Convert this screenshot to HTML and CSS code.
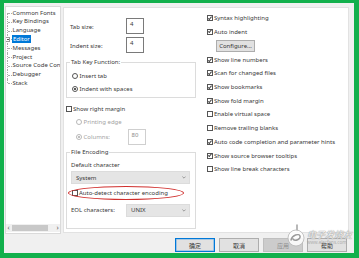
FILE: index.html
```html
<!DOCTYPE html>
<html lang="en">
<head>
  <meta charset="UTF-8">
  <meta name="viewport" content="width=device-width, initial-scale=1.0">
  <title>Editor Options</title>
  <link rel="stylesheet" href="styles.css">
</head>
<body>
  <div class="dialog">
    <div class="dialog-body">
      <!-- Category tree -->
      <div class="tree">
        <ul class="tree-list">
          <li>Common Fonts</li>
          <li>Key Bindings</li>
          <li>Language</li>
          <li class="has-children"><span class="expander"></span><span class="selected">Editor</span></li>
          <li>Messages</li>
          <li>Project</li>
          <li>Source Code Con</li>
          <li>Debugger</li>
          <li>Stack</li>
        </ul>
        <div class="hscroll">
          <span class="scroll-arrow">&lsaquo;</span>
          <div class="scroll-track"><div class="scroll-thumb"></div></div>
          <span class="scroll-arrow">&rsaquo;</span>
        </div>
      </div>

      <!-- Editor page -->
      <div class="panel">
        <div class="col-left">
          <div class="field-row">
            <span class="field-label">Tab size:</span>
            <span class="textbox">4</span>
          </div>
          <div class="field-row">
            <span class="field-label">Indent size:</span>
            <span class="textbox">4</span>
          </div>

          <fieldset class="group group-tabkey">
            <legend>Tab Key Function:</legend>
            <div class="opt"><span class="radio"></span>Insert tab</div>
            <div class="opt"><span class="radio on"></span>Indent with spaces</div>
          </fieldset>

          <div class="opt margin-toggle"><span class="check"></span>Show right margin</div>
          <div class="opt sub disabled printing-row"><span class="radio"></span>Printing edge</div>
          <div class="opt sub disabled columns-row">
            <span class="radio on"></span><span class="columns-label">Columns:</span>
            <span class="textbox">80</span>
          </div>

          <fieldset class="group group-encoding">
            <legend>File Encoding</legend>
            <div class="enc-label">Default character</div>
            <div class="combo combo-wide">System
              <svg class="chev" viewBox="0 0 6 4"><path d="M0.6 0.6 L3 3 L5.4 0.6" /></svg>
            </div>
            <div class="opt detect-row">
              <span class="check"></span>Auto-detect character encoding
              <span class="annotation"></span>
            </div>
            <div class="eol-row">
              <span class="eol-label">EOL characters:</span>
              <div class="combo combo-eol">UNIX
                <svg class="chev" viewBox="0 0 6 4"><path d="M0.6 0.6 L3 3 L5.4 0.6" /></svg>
              </div>
            </div>
          </fieldset>
        </div>

        <div class="col-right">
          <div class="opt"><span class="check on"></span>Syntax highlighting</div>
          <div class="opt"><span class="check on"></span>Auto indent</div>
          <div class="btn-row"><button class="btn-configure">Configure...</button></div>
          <div class="opt"><span class="check on"></span>Show line numbers</div>
          <div class="opt"><span class="check on"></span>Scan for changed files</div>
          <div class="opt"><span class="check on"></span>Show bookmarks</div>
          <div class="opt"><span class="check on"></span>Show fold margin</div>
          <div class="opt"><span class="check"></span>Enable virtual space</div>
          <div class="opt"><span class="check"></span>Remove trailing blanks</div>
          <div class="opt"><span class="check on"></span>Auto code completion and parameter hints</div>
          <div class="opt"><span class="check on"></span>Show source browser tooltips</div>
          <div class="opt"><span class="check"></span>Show line break characters</div>
        </div>
      </div>
    </div>

    <!-- Dialog buttons -->
    <div class="buttons">
      <button class="btn btn-default">确定</button>
      <button class="btn">取消</button>
      <button class="btn" disabled>应用</button>
      <button class="btn">帮助</button>
    </div>

    <!-- Site watermark -->
    <div class="watermark">
      <svg class="wm-logo" viewBox="0 0 20 24">
        <line x1="11" y1="1" x2="11" y2="7" />
        <circle cx="10" cy="14" r="8" />
        <path d="M5 16 C6 11 13 9 14 12 C15 15 9 18 7 15" />
      </svg>
      <div class="wm-text">
        <span class="wm-name">电子发烧友</span>
        <span class="wm-url">www.elecfans.com</span>
      </div>
    </div>
  </div>
</body>
</html>
```

FILE: styles.css
```css
html, body {
  margin: 0;
  padding: 0;
  background-color: #12b04c;
}

body {
  width: 359px;
  height: 258px;
  padding: 3px 5px 5px 4px;
  box-sizing: border-box;
  font-family: 'Noto Sans', 'Noto Sans CJK SC', sans-serif;
  font-size: 6px;
  color: #383838;
}

/* Dialog frame */
.dialog {
  position: relative;
  height: 250px;
  background-color: #f0f0f0;
  padding: 3px 5px 1px 1px;
  box-sizing: border-box;
  display: flex;
  flex-direction: column;
}

.dialog-body {
  display: flex;
  height: 228px;
}

/* Category tree */
.tree {
  width: 56px;
  height: 228px;
  box-sizing: border-box;
  background-color: #fff;
  border: 1px solid #dadada;
  display: flex;
  flex-direction: column;
}

.tree-list {
  list-style: none;
  margin: 0;
  padding: 1.6px 0 0 0;
  flex: 1;
}

.tree-list li {
  position: relative;
  height: 8.8px;
  line-height: 8.8px;
  padding-left: 6.5px;
  white-space: nowrap;
  overflow: hidden;
}

.tree-list li::before {
  content: '';
  position: absolute;
  left: 1px;
  top: 0;
  bottom: 0;
  border-left: 1px dotted #ababab;
}

.tree-list li:first-child::before {
  top: 50%;
}

.tree-list li:last-child::before {
  bottom: 50%;
}

.tree-list li::after {
  content: '';
  position: absolute;
  left: 2px;
  top: 4.4px;
  width: 4px;
  border-top: 1px dotted #ababab;
}

.expander {
  position: absolute;
  left: -1px;
  top: 2px;
  width: 5px;
  height: 5px;
  box-sizing: border-box;
  border: 1px solid #9a9a9a;
  background-color: #fff;
  z-index: 1;
}

.expander::after {
  content: '';
  position: absolute;
  left: 0.5px;
  top: 1px;
  width: 2px;
  height: 1px;
  background-color: #555;
}

.selected {
  background-color: #0078d7;
  color: #fff;
  padding: 0.5px 1px;
  margin-left: -0.5px;
}

.hscroll {
  height: 8px;
  display: flex;
  align-items: center;
  background-color: #f0f0f0;
  margin-bottom: 1px;
  color: #606060;
  font-size: 7px;
}

.scroll-arrow {
  width: 5px;
  text-align: center;
  line-height: 8px;
}

.scroll-track {
  flex: 1;
  height: 8px;
  display: flex;
  align-items: center;
  padding-left: 0.5px;
}

.scroll-thumb {
  width: 36px;
  height: 6px;
  background-color: #c8c8c8;
}

/* Editor page */
.panel {
  width: 286px;
  height: 226px;
  margin: 1px 0 0 2px;
  box-sizing: border-box;
  background-color: #fff;
  border: 1px solid #e2e2e2;
  display: flex;
}

.col-left {
  width: 130px;
  padding: 10px 0 0 2px;
}

.col-right {
  margin-left: 11px;
  padding-top: 3px;
}

.field-row {
  display: flex;
  align-items: center;
  height: 16px;
  padding-left: 4px;
}

.field-row + .field-row {
  margin-top: 3px;
}

.field-label {
  width: 56px;
  padding-top: 1px;
}

.textbox {
  width: 18px;
  height: 16px;
  box-sizing: border-box;
  border: 1px solid #7a7a7a;
  background-color: #fff;
  padding: 1px 0 0 3px;
  line-height: 8px;
}

.opt {
  display: flex;
  align-items: center;
  height: 13px;
  white-space: nowrap;
}

.col-right .opt {
  height: 13.7px;
}

.check {
  position: relative;
  width: 6px;
  height: 6px;
  box-sizing: border-box;
  border: 1px solid #555;
  margin-right: 1px;
  flex-shrink: 0;
}

.check.on::after {
  content: '';
  position: absolute;
  left: 1.3px;
  top: -0.2px;
  width: 1.3px;
  height: 2.6px;
  border-right: 0.8px solid #444;
  border-bottom: 0.8px solid #444;
  transform: rotate(40deg);
}

.radio {
  position: relative;
  width: 6px;
  height: 6px;
  box-sizing: border-box;
  border: 1px solid #555;
  border-radius: 50%;
  margin-right: 1.5px;
  flex-shrink: 0;
}

.radio.on::after {
  content: '';
  position: absolute;
  left: 1px;
  top: 1px;
  width: 2px;
  height: 2px;
  border-radius: 50%;
  background-color: #222;
}

/* Group boxes */
.group {
  margin: 4.5px 0 0 0;
  padding: 0 4px;
  border: 1px solid #dcdcdc;
  min-width: 0;
}

.group legend {
  padding: 0 1px;
  margin-left: -1px;
  line-height: 9px;
}

.group-tabkey {
  padding-top: 3px;
  padding-bottom: 1.5px;
}

.group-tabkey .opt {
  padding-left: 1px;
}

.margin-toggle {
  margin-top: 4.5px;
}

.sub {
  padding-left: 10px;
}

.printing-row {
  height: 13.5px;
}

.columns-row {
  height: 16px;
}

.columns-label {
  width: 44px;
}

.disabled {
  color: #a3a3a3;
}

.disabled .radio {
  border-color: #b8b8b8;
}

.disabled .radio.on::after {
  background-color: #a8a8a8;
}

.disabled .textbox {
  border-color: #cfcfcf;
  color: #8a8a8a;
}

.group-encoding {
  margin-top: 2.5px;
  padding-top: 2.5px;
  padding-bottom: 11px;
}

.enc-label {
  height: 12px;
  line-height: 12px;
}

.combo {
  display: flex;
  align-items: center;
  justify-content: space-between;
  height: 13px;
  box-sizing: border-box;
  background-color: #e5e5e5;
  border: 1px solid #dcdcdc;
  padding: 0 3px 0 4px;
}

.combo-wide {
  width: 119px;
}

.combo-eol {
  width: 64px;
}

.chev {
  width: 4px;
  height: 3px;
}

.chev path {
  fill: none;
  stroke: #666;
  stroke-width: 0.9;
}

.detect-row {
  position: relative;
  height: 14px;
  margin-top: 2px;
  padding-left: 1px;
}

.annotation {
  position: absolute;
  left: -3px;
  top: 0;
  width: 116px;
  height: 14px;
  box-sizing: border-box;
  border: 1.2px solid #d0302e;
  border-radius: 58px / 7px;
}

.eol-row {
  display: flex;
  align-items: center;
  height: 14px;
  margin-top: 3px;
}

.eol-label {
  width: 55px;
}

.btn-row {
  height: 14.5px;
  display: flex;
  align-items: center;
  padding-left: 9px;
}

.btn-configure {
  width: 39px;
  height: 12px;
  padding: 0;
  font: inherit;
  color: inherit;
  background-color: #e1e1e1;
  border: 1px solid #adadad;
}

/* Bottom buttons */
.buttons {
  display: flex;
  justify-content: flex-end;
  gap: 4px;
  margin-top: 4px;
  padding-right: 2px;
}

.btn {
  width: 40px;
  height: 14px;
  padding: 0;
  font-family: 'Noto Sans CJK SC', sans-serif;
  font-size: 6px;
  color: #383838;
  background-color: #e1e1e1;
  border: 1px solid #adadad;
}

.btn-default {
  border-color: #0078d7;
  box-shadow: inset 0 0 0 0.6px #6fb0e8;
}

.btn:disabled {
  background-color: #cccccc;
  border-color: #bfbfbf;
  color: #8d8d8d;
}

/* Watermark overlay */
.watermark {
  position: absolute;
  left: 282px;
  top: 221px;
  display: flex;
  align-items: flex-end;
  pointer-events: none;
}

.wm-logo {
  width: 20px;
  height: 24px;
}

.wm-logo circle {
  fill: rgba(255, 255, 255, 0.85);
  stroke: #b5b5b5;
  stroke-width: 0.8;
}

.wm-logo line,
.wm-logo path {
  fill: none;
  stroke: #9a9a9a;
  stroke-width: 1.4;
  stroke-linecap: round;
}

.wm-text {
  display: flex;
  flex-direction: column;
  margin: 0 0 3px 1px;
}

.wm-name {
  font-family: 'Noto Sans CJK SC', sans-serif;
  font-size: 9px;
  font-style: italic;
  line-height: 10px;
  color: rgba(255, 255, 255, 0.9);
  text-shadow: 0 0 1px #8a8a8a, 0 0 1px #8a8a8a;
}

.wm-url {
  font-size: 4.5px;
  line-height: 5px;
  color: rgba(160, 160, 160, 0.8);
}
```
